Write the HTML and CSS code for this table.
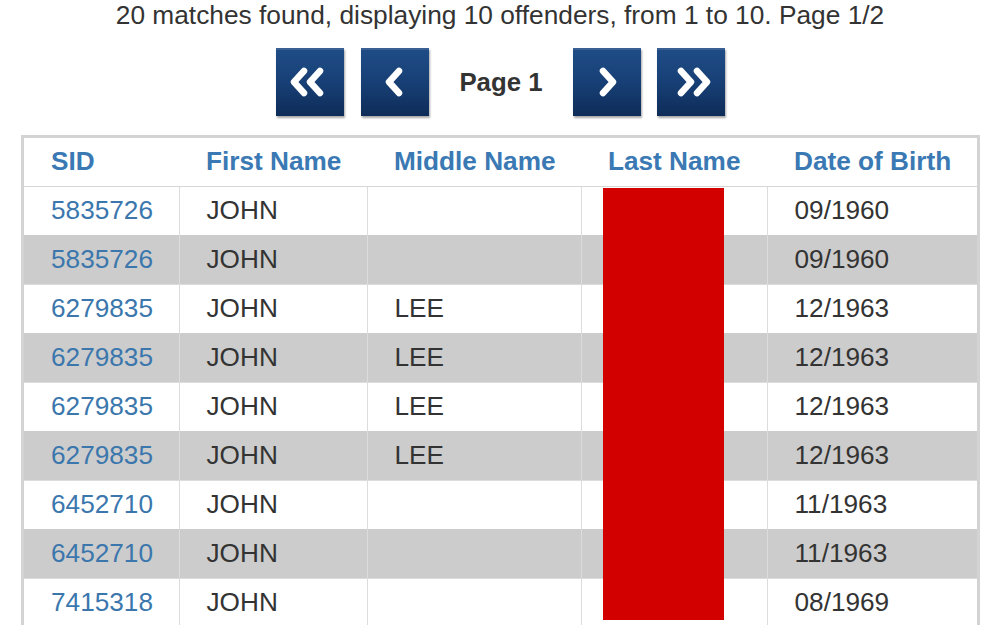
FILE: index.html
```html
<!DOCTYPE html>
<html>
<head>
<meta charset="utf-8">
<link rel="stylesheet" href="styles.css">
</head>
<body>
<p class="summary">20 matches found, displaying 10 offenders, from 1 to 10. Page 1/2</p>
<div class="pager">
  <a class="pbtn first"><svg width="68" height="68" viewBox="0 0 68 68"><polyline points="28,23 18,34 28,45" /><polyline points="44,23 34,34 44,45" /></svg></a>
  <a class="pbtn prev"><svg width="68" height="68" viewBox="0 0 68 68"><polyline points="38,23 28,34 38,45" /></svg></a>
  <span class="plabel">Page 1</span>
  <a class="pbtn next"><svg width="68" height="68" viewBox="0 0 68 68"><polyline points="30,23 40,34 30,45" /></svg></a>
  <a class="pbtn last"><svg width="68" height="68" viewBox="0 0 68 68"><polyline points="24,23 34,34 24,45" /><polyline points="40,23 50,34 40,45" /></svg></a>
</div>
<div class="tablewrap">
  <table class="results">
    <colgroup>
      <col class="c1"><col class="c2"><col class="c3"><col class="c4"><col class="c5">
    </colgroup>
    <thead>
      <tr><th>SID</th><th>First Name</th><th>Middle Name</th><th>Last Name</th><th>Date of Birth</th></tr>
    </thead>
    <tbody>
      <tr><td><a>5835726</a></td><td>JOHN</td><td></td><td></td><td>09/1960</td></tr>
      <tr class="alt"><td><a>5835726</a></td><td>JOHN</td><td></td><td></td><td>09/1960</td></tr>
      <tr><td><a>6279835</a></td><td>JOHN</td><td>LEE</td><td></td><td>12/1963</td></tr>
      <tr class="alt"><td><a>6279835</a></td><td>JOHN</td><td>LEE</td><td></td><td>12/1963</td></tr>
      <tr><td><a>6279835</a></td><td>JOHN</td><td>LEE</td><td></td><td>12/1963</td></tr>
      <tr class="alt"><td><a>6279835</a></td><td>JOHN</td><td>LEE</td><td></td><td>12/1963</td></tr>
      <tr><td><a>6452710</a></td><td>JOHN</td><td></td><td></td><td>11/1963</td></tr>
      <tr class="alt"><td><a>6452710</a></td><td>JOHN</td><td></td><td></td><td>11/1963</td></tr>
      <tr class="lastrow"><td><a>7415318</a></td><td>JOHN</td><td></td><td></td><td>08/1969</td></tr>
    </tbody>
  </table>
  <div class="redact"></div>
</div>
</body>
</html>
```
FILE: styles.css
```css
html, body {
  margin: 0;
  padding: 0;
  background: #fff;
  overflow: hidden;
}
body {
  font-family: "Liberation Sans", Arial, sans-serif;
  color: #333;
  width: 1000px;
  height: 625px;
}
.summary {
  margin: 0;
  padding-top: 1px;
  height: 47px;
  text-align: center;
  font-size: 26.3px;
  line-height: 28px;
  color: #333;
}
.pager {
  display: flex;
  align-items: center;
  height: 68px;
  padding-left: 276px;
}
.pbtn {
  display: block;
  width: 68px;
  height: 68px;
  box-sizing: border-box;
  background: linear-gradient(#1f4c86 0%, #173f75 50%, #0e2c58 100%);
  border-top: 2px solid #3a5f93;
  box-shadow: 1px 2px 2px rgba(0,0,0,0.35);
}
.pbtn svg {
  display: block;
  margin-top: -2px;
}
.pbtn polyline {
  fill: none;
  stroke: #fff;
  stroke-width: 6.5;
  stroke-linecap: round;
  stroke-linejoin: round;
}
.prev { margin-left: 17px; }
.plabel {
  width: 144px;
  text-align: center;
  font-weight: bold;
  font-size: 25.8px;
  color: #333;
}
.last { margin-left: 16px; }
.tablewrap {
  position: relative;
  margin: 19px 0 0 21px;
  width: 953px;
  border: 3px solid #d3d3d3;
  border-bottom: 0;
}
.results {
  border-collapse: collapse;
  table-layout: fixed;
  width: 953px;
  font-size: 26.2px;
}
.c1 { width: 155px; }
.c2 { width: 188px; }
.c3 { width: 214px; }
.c4 { width: 186px; }
.c5 { width: 210px; }
.results th {
  height: 48px;
  padding: 0 0 0 27px;
  box-sizing: border-box;
  text-align: left;
  font-weight: bold;
  color: #3a79b3;
  border-bottom: 1px solid #d6d6d6;
  white-space: nowrap;
}
.results td {
  height: 48px;
  padding: 0 0 0 27px;
  border-top: 1px solid #dcdcdc;
  border-left: 1px solid #dcdcdc;
  white-space: nowrap;
}
.results td:first-child { border-left: 0; }
.results td a { color: #3b77ad; }
.results tr.alt td {
  background: #cccccc;
  border-top-color: #cccccc;
}
.results tr.lastrow td {
  height: 48px;
  vertical-align: top;
  padding-top: 8px;
  box-sizing: border-box;
}
.redact {
  position: absolute;
  left: 579px;
  top: 50px;
  width: 121px;
  height: 432px;
  background: #d30000;
}
```
